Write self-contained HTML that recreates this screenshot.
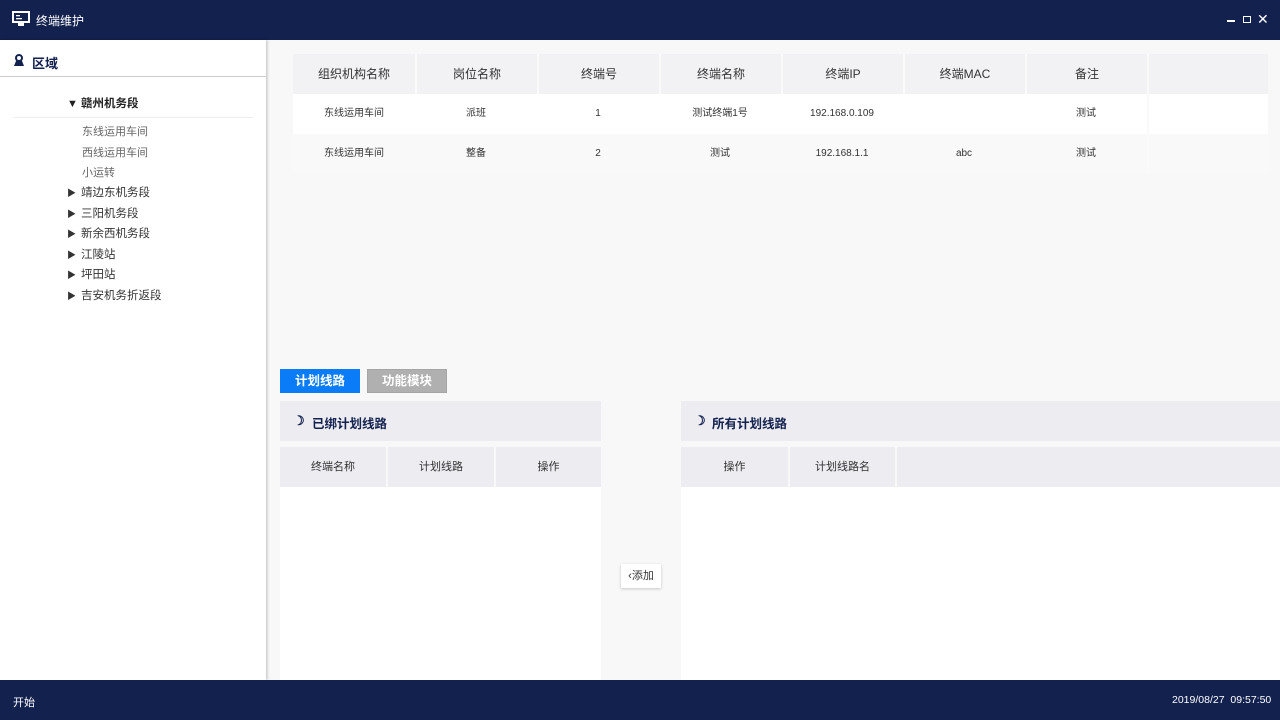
<!DOCTYPE html>
<html><head><meta charset="utf-8"><style>
*{margin:0;padding:0;box-sizing:border-box}
body{width:1280px;height:720px;position:relative;overflow:hidden;background:#f8f8f9;font-family:"Liberation Sans","Noto Sans CJK SC",sans-serif;color:#333}
.abs{position:absolute}
.title{left:0;top:0;width:1280px;height:40px;background:#13214f;color:#fff;font-size:12px}
.task{left:0;top:680px;width:1280px;height:40px;background:#13214f;color:#fff;font-size:11px}
.left{left:0;top:40px;width:266px;height:640px;background:#fff;box-shadow:1px 0 3px rgba(0,0,0,.25)}
.tree div{position:absolute;font-size:11.5px;color:#333;line-height:14px}
.tri{font-size:9px;margin-right:5px;display:inline-block;width:9px}
.cell{position:absolute;display:flex;align-items:center;justify-content:center;font-size:11px;line-height:14px}
.cell span{display:block;line-height:14px;height:14px}
</style></head><body>
<div class="abs title">
 <svg class="abs" style="left:12px;top:11px" width="18" height="16" viewBox="0 0 18 16"><rect x="1" y="1" width="16" height="10" fill="none" stroke="#fff" stroke-width="2"/><rect x="4" y="4" width="4" height="1.3" fill="#fff"/><rect x="4" y="7" width="6" height="1.3" fill="#fff"/><rect x="6" y="12" width="6" height="3" fill="#fff"/></svg>
 <span class="abs" style="left:36px;top:12px">终端维护</span>
 <div class="abs" style="left:1227px;top:20px;width:8px;height:1.5px;background:#fff"></div>
 <div class="abs" style="left:1243px;top:16px;width:8px;height:7px;border:1.5px solid #fff"></div>
 <span class="abs" style="left:1257px;top:11px;font-size:14px">✕</span>
</div>
<div class="abs left">
 <svg class="abs" style="left:13px;top:14px" width="12" height="12" viewBox="0 0 12 12"><circle cx="6" cy="4" r="3" fill="none" stroke="#13214f" stroke-width="2"/><path d="M1 12 L3 7 L9 7 L11 12Z" fill="#13214f"/></svg>
 <span class="abs" style="left:32px;top:13px;font-size:13px;color:#13214f;font-weight:bold">区域</span>
 <div class="abs" style="left:0;top:36px;width:266px;height:1px;background:#ccc"></div>
 <div class="tree">
  <div style="left:67px;top:57px;font-weight:bold;color:#222"><span class="tri" style="font-size:11px">▼</span>赣州机务段</div>
  <div style="left:13px;top:77px;width:240px;height:1px;background:#eee"></div>
  <div style="left:82px;top:85px;font-size:11px;color:#666">东线运用车间</div>
  <div style="left:82px;top:106px;font-size:11px;color:#666">西线运用车间</div>
  <div style="left:82px;top:126px;font-size:11px;color:#666">小运转</div>
  <div style="left:67px;top:146px"><span class="tri">▶</span>靖边东机务段</div>
  <div style="left:67px;top:167px"><span class="tri">▶</span>三阳机务段</div>
  <div style="left:67px;top:187px"><span class="tri">▶</span>新余西机务段</div>
  <div style="left:67px;top:208px"><span class="tri">▶</span>江陵站</div>
  <div style="left:67px;top:228px"><span class="tri">▶</span>坪田站</div>
  <div style="left:67px;top:249px"><span class="tri">▶</span>吉安机务折返段</div>
 </div>
</div>
<div class="abs" style="left:293px;top:54px;width:975px;height:120px">
 <div class="abs" style="left:0;top:0;width:975px;height:40px;background:#f2f2f5"></div>
 <div class="abs" style="left:0;top:40px;width:975px;height:40px;background:#fff"></div>
 <div class="abs" style="left:0;top:80px;width:975px;height:40px;background:#f9f9fa"></div>
</div>
<div class="cell" style="left:293px;top:54px;width:122px;height:40px;font-size:12px"><span>组织机构名称</span></div>
<div class="cell" style="left:415px;top:54px;width:122px;height:40px;font-size:12px;border-left:2px solid #fafafb"><span>岗位名称</span></div>
<div class="cell" style="left:537px;top:54px;width:122px;height:40px;font-size:12px;border-left:2px solid #fafafb"><span>终端号</span></div>
<div class="cell" style="left:659px;top:54px;width:122px;height:40px;font-size:12px;border-left:2px solid #fafafb"><span>终端名称</span></div>
<div class="cell" style="left:781px;top:54px;width:122px;height:40px;font-size:12px;border-left:2px solid #fafafb"><span>终端IP</span></div>
<div class="cell" style="left:903px;top:54px;width:122px;height:40px;font-size:12px;border-left:2px solid #fafafb"><span>终端MAC</span></div>
<div class="cell" style="left:1025px;top:54px;width:122px;height:40px;font-size:12px;border-left:2px solid #fafafb"><span>备注</span></div>
<div class="cell" style="left:1147px;top:54px;width:121px;height:120px;border-left:2px solid #fafafb"></div>
<div class="cell" style="left:293px;top:94px;width:122px;height:40px;font-size:10px"><span>东线运用车间</span></div>
<div class="cell" style="left:415px;top:94px;width:122px;height:40px;font-size:10px"><span>派班</span></div>
<div class="cell" style="left:537px;top:94px;width:122px;height:40px;font-size:10px"><span>1</span></div>
<div class="cell" style="left:659px;top:94px;width:122px;height:40px;font-size:10px"><span>测试终端1号</span></div>
<div class="cell" style="left:781px;top:94px;width:122px;height:40px;font-size:10px"><span>192.168.0.109</span></div>
<div class="cell" style="left:1025px;top:94px;width:122px;height:40px;font-size:10px"><span>测试</span></div>
<div class="cell" style="left:293px;top:134px;width:122px;height:40px;font-size:10px"><span>东线运用车间</span></div>
<div class="cell" style="left:415px;top:134px;width:122px;height:40px;font-size:10px"><span>整备</span></div>
<div class="cell" style="left:537px;top:134px;width:122px;height:40px;font-size:10px"><span>2</span></div>
<div class="cell" style="left:659px;top:134px;width:122px;height:40px;font-size:10px"><span>测试</span></div>
<div class="cell" style="left:781px;top:134px;width:122px;height:40px;font-size:10px"><span>192.168.1.1</span></div>
<div class="cell" style="left:903px;top:134px;width:122px;height:40px;font-size:10px"><span>abc</span></div>
<div class="cell" style="left:1025px;top:134px;width:122px;height:40px;font-size:10px"><span>测试</span></div>
<div class="cell" style="left:280px;top:369px;width:80px;height:24px;background:#0a7cf7;color:#fff;font-weight:bold;font-size:12.5px">计划线路</div>
<div class="cell" style="left:367px;top:369px;width:80px;height:24px;background:#b0b0b0;border:1px solid #a5a5a5;color:#fff;font-weight:bold;font-size:12.5px">功能模块</div>
<div class="abs" style="left:280px;top:401px;width:321px;height:40px;background:#ececf1"></div>
<span class="abs" style="left:293px;top:413px;font-size:13px;color:#13214f;font-weight:bold">☽</span>
<span class="abs" style="left:312px;top:413px;font-size:12.5px;color:#13214f;font-weight:bold">已绑计划线路</span>
<div class="cell" style="left:280px;top:447px;width:106px;height:40px;background:#ececf1">终端名称</div>
<div class="cell" style="left:388px;top:447px;width:106px;height:40px;background:#ececf1">计划线路</div>
<div class="cell" style="left:496px;top:447px;width:105px;height:40px;background:#ececf1">操作</div>
<div class="abs" style="left:280px;top:487px;width:321px;height:193px;background:#fff"></div>
<div class="cell" style="left:621px;top:564px;width:40px;height:24px;background:#fff;box-shadow:0 1px 3px rgba(0,0,0,.2);font-size:11px">‹添加</div>
<div class="abs" style="left:681px;top:401px;width:599px;height:40px;background:#ececf1"></div>
<span class="abs" style="left:694px;top:413px;font-size:13px;color:#13214f;font-weight:bold">☽</span>
<span class="abs" style="left:712px;top:413px;font-size:12.5px;color:#13214f;font-weight:bold">所有计划线路</span>
<div class="cell" style="left:681px;top:447px;width:107px;height:40px;background:#ececf1">操作</div>
<div class="cell" style="left:790px;top:447px;width:105px;height:40px;background:#ececf1">计划线路名</div>
<div class="cell" style="left:897px;top:447px;width:383px;height:40px;background:#ececf1"></div>
<div class="abs" style="left:681px;top:487px;width:599px;height:193px;background:#fff"></div>
<div class="abs task">
 <span class="abs" style="left:13px;top:14px">开始</span>
 <span class="abs" style="left:1172px;top:14px;font-size:10.5px">2019/08/27 &nbsp;09:57:50</span>
</div>
</body></html>
